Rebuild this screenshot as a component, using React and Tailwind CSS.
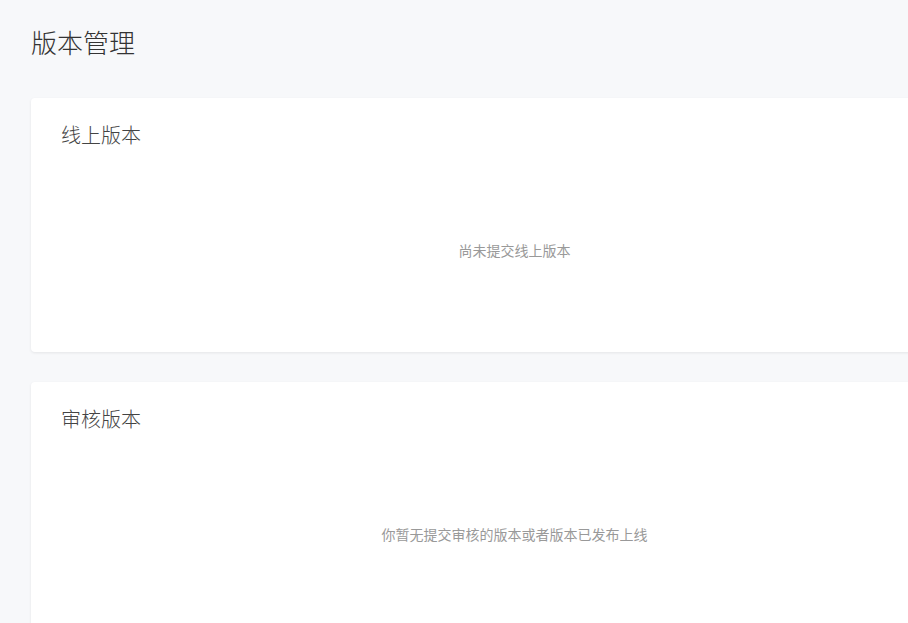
const font = { fontFamily: '"Noto Sans CJK SC", "Noto Sans", sans-serif' };

function VersionCard({ title, empty }) {
  return (
    <section className="h-[254px] rounded bg-white shadow-[0_1px_3px_rgba(0,0,0,0.08)] flex flex-col">
      <h2 className="px-[30px] pt-[25px] text-[20px] leading-[24px] font-light text-[#444]">{title}</h2>
      <div className="flex-1 flex items-start justify-center pt-[93px]">
        <p className="text-[14px] leading-[20px] text-[#999]">{empty}</p>
      </div>
    </section>
  );
}

export default function App() {
  return (
    <div className="h-screen w-full overflow-hidden bg-[#f7f8fa]" style={font}>
      <div className="w-[967px] ml-[31px] pt-[24px]">
        <h1 className="text-[26px] leading-[36px] font-light text-[#333]">版本管理</h1>
        <div className="mt-[38px] flex flex-col gap-[30px]">
          <VersionCard title="线上版本" empty="尚未提交线上版本" />
          <VersionCard title="审核版本" empty="你暂无提交审核的版本或者版本已发布上线" />
        </div>
      </div>
    </div>
  );
}
